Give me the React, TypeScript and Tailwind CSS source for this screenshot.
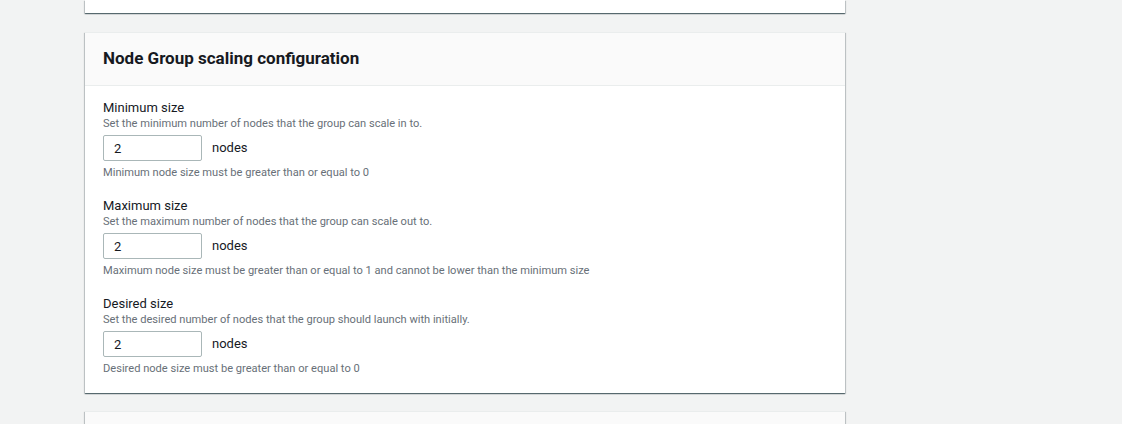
const fields = [
  {
    label: "Minimum size",
    desc: "Set the minimum number of nodes that the group can scale in to.",
    hint: "Minimum node size must be greater than or equal to 0",
  },
  {
    label: "Maximum size",
    desc: "Set the maximum number of nodes that the group can scale out to.",
    hint: "Maximum node size must be greater than or equal to 1 and cannot be lower than the minimum size",
  },
  {
    label: "Desired size",
    desc: "Set the desired number of nodes that the group should launch with initially.",
    hint: "Desired node size must be greater than or equal to 0",
  },
];

const card =
  "bg-white border-t border-[#eaeded] shadow-[0_1px_1px_0_rgba(0,28,36,0.5),1px_1px_1px_0_rgba(0,28,36,0.15),-1px_1px_1px_0_rgba(0,28,36,0.15)]";

export default function App() {
  return (
    <div className="min-h-screen bg-[#f2f3f3] font-['Roboto',sans-serif] text-[#16191f] overflow-hidden h-[424px]">
      <div className="ml-[85px] w-[760px] flex flex-col">
        {/* previous card, mostly scrolled out */}
        <div className={`${card} h-[13px] border-t-0`} />

        <div className={`${card} mt-[19px]`}>
          <div className="bg-[#fafafa] border-b border-[#eaeded] h-[53px] px-[18px] pb-[2px] flex items-center">
            <h2 className="text-[17px] font-bold leading-none">Node Group scaling configuration</h2>
          </div>
          <div className="px-[18px] pt-[13px] pb-[16px]">
            {fields.map((f, i) => (
              <div key={f.label} className={i > 0 ? "mt-[16px]" : ""}>
                <div className="text-[13px] leading-[18px]">{f.label}</div>
                <div className="text-[11.1px] leading-[14px] text-[#687078]">{f.desc}</div>
                <div className="mt-[4px] flex items-center">
                  <input
                    defaultValue="2"
                    className="w-[99px] h-[26px] border border-[#aab7b8] rounded-[2px] pl-[10px] text-[13px] text-[#16191f] outline-none bg-white"
                  />
                  <span className="ml-[10px] text-[13px]">nodes</span>
                </div>
                <div className="mt-[4px] text-[11.1px] leading-[16px] text-[#687078]">{f.hint}</div>
              </div>
            ))}
          </div>
        </div>

        <div className={`${card} mt-[18px] h-[40px]`}>
          <div className="bg-[#fafafa] h-full" />
        </div>
      </div>
    </div>
  );
}
